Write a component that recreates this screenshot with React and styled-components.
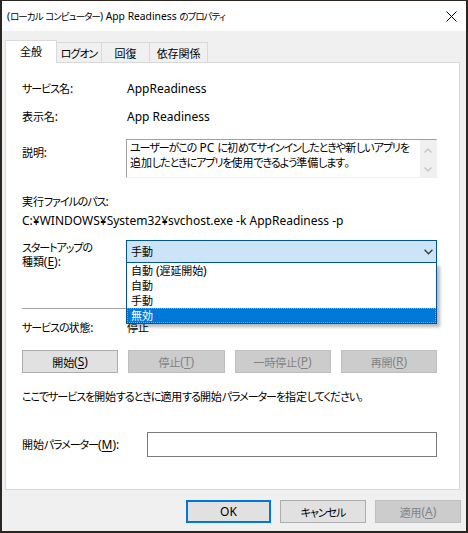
import React from "react";
import styled, { createGlobalStyle } from "styled-components";

const GlobalStyle = createGlobalStyle`
  html, body {
    margin: 0;
    padding: 0;
    background: #ffffff;
  }
  body {
    font-family: "Noto Sans", "Noto Sans CJK JP", sans-serif;
    font-size: 12px;
    color: #000000;
    font-feature-settings: "palt";
  }
  * {
    box-sizing: border-box;
  }
`;

// Yu Gothic UI draws kana narrower than kanji, so runs get their own spans
const Kana = styled.span`
  font-size: 0.917em;
  letter-spacing: -0.095em;
`;

const Kanji = styled.span`
  font-size: 0.917em;
  letter-spacing: -0.01em;
`;

const KANA = /[\u3040-\u30ff\uff66-\uff9f]/;
const WIDE = /[\u3000-\u303f\u3400-\u9fff\uff01-\uff60]/;

const J = ({ t }) => {
  const runs = [];
  for (const ch of t) {
    const type = KANA.test(ch) ? "kana" : WIDE.test(ch) ? "kanji" : "latin";
    const last = runs[runs.length - 1];
    if (last && last.type === type) last.s += ch;
    else runs.push({ type, s: ch });
  }
  return runs.map((r, i) =>
    r.type === "kana" ? (
      <Kana key={i}>{r.s}</Kana>
    ) : r.type === "kanji" ? (
      <Kanji key={i}>{r.s}</Kanji>
    ) : (
      <React.Fragment key={i}>{r.s}</React.Fragment>
    )
  );
};

const Window = styled.div`
  width: 468px;
  height: 533px;
  border: 2px solid #2b2622;
  border-top-width: 1px;
  background: #f0f0f0;
  display: flex;
  flex-direction: column;
`;

const TitleBar = styled.div`
  height: 30px;
  background: #ffffff;
  display: flex;
  align-items: center;
  justify-content: space-between;
  padding: 0 9px 0 5px;
`;

const Title = styled.div`
  font-size: 10.3px;
  line-height: 16px;
  white-space: nowrap;
`;

const Body = styled.div`
  flex: 1;
  padding: 9px 5px 0 3px;
  display: flex;
  flex-direction: column;
`;

const TabStrip = styled.div`
  display: flex;
  align-items: flex-end;
  height: 22px;
`;

const Tab = styled.div`
  width: ${(p) => p.$w}px;
  height: ${(p) => (p.$active ? 23 : 20)}px;
  margin-bottom: ${(p) => (p.$active ? -1 : 0)}px;
  margin-left: ${(p) => (p.$first ? 0 : -1)}px;
  background: ${(p) => (p.$active ? "#ffffff" : "#f0f0f0")};
  border: 1px solid #d9d9d9;
  border-bottom: none;
  display: flex;
  align-items: center;
  justify-content: center;
  white-space: nowrap;
  padding-bottom: ${(p) => (p.$active ? 2 : 0)}px;
  z-index: ${(p) => (p.$active ? 1 : 0)};
  position: relative;
`;

const Panel = styled.div`
  width: 455px;
  height: 428px;
  background: #ffffff;
  border: 1px solid #d9d9d9;
  padding: 18px 22px 0 16px;
  display: flex;
  flex-direction: column;
`;

const FieldRow = styled.div`
  display: grid;
  grid-template-columns: ${(p) => p.$label || 104}px 1fr;
  align-items: ${(p) => p.$align || "start"};
  margin-top: ${(p) => p.$mt || 0}px;
  line-height: 16px;
`;

const Label = styled.div`
  line-height: ${(p) => p.$lh || 16}px;
  padding-top: ${(p) => p.$pt || 0}px;
  white-space: nowrap;
`;

const Value = styled.div`
  padding-left: 1px;
`;

const Line = styled.div`
  margin-top: ${(p) => p.$mt || 0}px;
  line-height: 16px;
  white-space: nowrap;
`;

const DescBox = styled.div`
  height: 39px;
  display: flex;
  border: 1px solid #a0a0a0;
  border-right-color: #f0f0f0;
  border-bottom-color: #f0f0f0;
`;

const DescText = styled.div`
  flex: 1;
  padding: 0 0 0 3px;
  line-height: 15px;
  white-space: nowrap;
  overflow: hidden;
`;

const ScrollBar = styled.div`
  width: 16px;
  background: #f0f0f0;
  display: flex;
  flex-direction: column;
  align-items: center;
  justify-content: space-between;
  padding: 8px 0 5px;
`;

const ComboWrap = styled.div`
  position: relative;
`;

const Combo = styled.div`
  height: 23px;
  border: 1px solid #005499;
  background: #cce4f7;
  display: flex;
  align-items: center;
  justify-content: space-between;
  padding: 0 3px 0 4px;
`;

const DropList = styled.div`
  position: absolute;
  top: 23px;
  left: 0;
  right: 0;
  background: #ffffff;
  border: 1px solid #005499;
  border-top: none;
  box-shadow: 3px 3px 3px rgba(0, 0, 0, 0.28);
  z-index: 5;
`;

const DropItem = styled.div`
  height: 15px;
  line-height: 13px;
  padding-left: 3px;
  border: 1px dotted ${(p) => (p.$selected ? "#ff8728" : "transparent")};
  background: ${(p) => (p.$selected ? "#0078d7" : "transparent")};
  color: ${(p) => (p.$selected ? "#ffffff" : "#000000")};
`;

const Separator = styled.div`
  height: 1px;
  background: #a0a0a0;
  margin-top: ${(p) => p.$mt}px;
`;

const ButtonGrid = styled.div`
  display: grid;
  grid-template-columns: repeat(4, 1fr);
  column-gap: 10px;
  margin-top: 14px;
`;

const Button = styled.div`
  height: 23px;
  width: ${(p) => (p.$w ? `${p.$w}px` : "auto")};
  display: flex;
  align-items: center;
  justify-content: center;
  white-space: nowrap;
  background: ${(p) => (p.$disabled ? "#cccccc" : "#e1e1e1")};
  border: ${(p) => (p.$default ? "2px solid #0078d7" : `1px solid ${p.$disabled ? "#bfbfbf" : "#adadad"}`)};
  color: ${(p) => (p.$disabled ? "#838383" : "#000000")};
`;

const Mnemonic = styled.span`
  text-decoration: underline;
  text-underline-offset: 2px;
`;

const TextInput = styled.div`
  height: 25px;
  border: 1px solid #7a7a7a;
  background: #ffffff;
`;

const Footer = styled.div`
  display: flex;
  justify-content: flex-end;
  gap: 9px;
  margin-top: 10px;
`;

const Chevron = ({ up, color = "#c0c0c0", w = 8, h = 5 }) => (
  <svg width={w} height={h} viewBox="0 0 8 5" fill="none">
    <polyline
      points={up ? "0.5,4.5 4,1 7.5,4.5" : "0.5,0.5 4,4 7.5,0.5"}
      stroke={color}
      strokeWidth="1.2"
    />
  </svg>
);

const CloseIcon = () => (
  <svg width="11" height="11" viewBox="0 0 11 11">
    <path d="M0.5 0.5 L10.5 10.5 M10.5 0.5 L0.5 10.5" stroke="#000" strokeWidth="1" />
  </svg>
);

const options = ["自動 (遅延開始)", "自動", "手動", "無効"];

export default function App() {
  return (
    <>
      <GlobalStyle />
      <Window>
        <TitleBar>
          <Title>
            <J t="(ローカル コンピューター) App Readiness のプロパティ" />
          </Title>
          <CloseIcon />
        </TitleBar>
        <Body>
          <TabStrip>
            <Tab $active $first $w={52}><J t="全般" /></Tab>
            <Tab $w={46}><J t="ログオン" /></Tab>
            <Tab $w={49}><J t="回復" /></Tab>
            <Tab $w={59}><J t="依存関係" /></Tab>
          </TabStrip>
          <Panel>
            <FieldRow>
              <Label><J t="サービス名:" /></Label>
              <Value>AppReadiness</Value>
            </FieldRow>
            <FieldRow $mt={12}>
              <Label><J t="表示名:" /></Label>
              <Value>App Readiness</Value>
            </FieldRow>
            <FieldRow $mt={14}>
              <Label $pt={6}><J t="説明:" /></Label>
              <DescBox>
                <DescText>
                  <J t="ユーザーがこの PC に初めてサインインしたときや新しいアプリを" />
                  <br />
                  <J t="追加したときにアプリを使用できるよう準備します。" />
                </DescText>
                <ScrollBar>
                  <Chevron up />
                  <Chevron />
                </ScrollBar>
              </DescBox>
            </FieldRow>
            <Line $mt={16}><J t="実行ファイルのパス:" /></Line>
            <Line $mt={3}>C:¥WINDOWS¥System32¥svchost.exe -k AppReadiness -p</Line>
            <FieldRow $mt={11}>
              <Label $lh={14} $pt={1}>
                <J t="スタートアップの" />
                <br />
                <J t="種類" />(<Mnemonic>E</Mnemonic>):
              </Label>
              <ComboWrap>
                <Combo>
                  <span><J t="手動" /></span>
                  <Chevron color="#3c3c3c" w={9} h={6} />
                </Combo>
                <DropList>
                  {options.map((o) => (
                    <DropItem key={o} $selected={o === "無効"}>
                      <J t={o} />
                    </DropItem>
                  ))}
                </DropList>
              </ComboWrap>
            </FieldRow>
            <Separator $mt={39} />
            <FieldRow $mt={11}>
              <Label><J t="サービスの状態:" /></Label>
              <Value><J t="停止" /></Value>
            </FieldRow>
            <ButtonGrid>
              <Button>
                <J t="開始" />(<Mnemonic>S</Mnemonic>)
              </Button>
              <Button $disabled>
                <J t="停止" />(<Mnemonic>T</Mnemonic>)
              </Button>
              <Button $disabled>
                <J t="一時停止" />(<Mnemonic>P</Mnemonic>)
              </Button>
              <Button $disabled>
                <J t="再開" />(<Mnemonic>R</Mnemonic>)
              </Button>
            </ButtonGrid>
            <Line $mt={16}>
              <J t="ここでサービスを開始するときに適用する開始パラメーターを指定してください。" />
            </Line>
            <FieldRow $mt={27} $label={125} $align="center">
              <Label>
                <J t="開始パラメーター" />(<Mnemonic>M</Mnemonic>):
              </Label>
              <TextInput />
            </FieldRow>
          </Panel>
          <Footer>
            <Button $default $w={85}>OK</Button>
            <Button $w={86}><J t="キャンセル" /></Button>
            <Button $disabled $w={86}>
              <J t="適用" />(<Mnemonic>A</Mnemonic>)
            </Button>
          </Footer>
        </Body>
      </Window>
    </>
  );
}
